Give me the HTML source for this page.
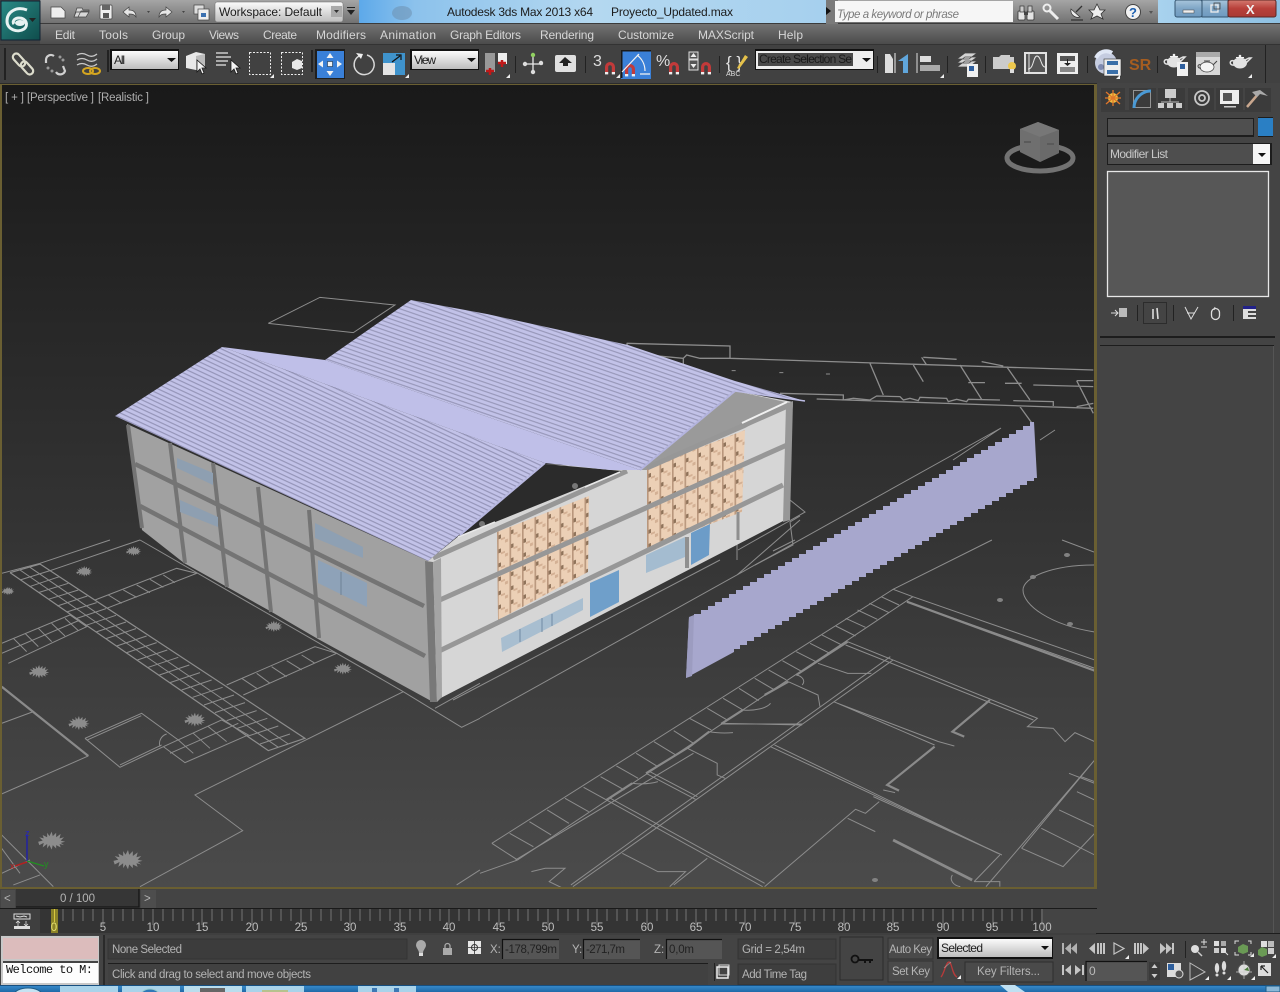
<!DOCTYPE html>
<html><head><meta charset="utf-8"><title>Autodesk 3ds Max 2013 x64 Proyecto_Updated.max</title>
<style>
html,body{margin:0;padding:0;background:#444;overflow:hidden}
svg{display:block;position:absolute;left:0;top:0}
text{font-family:"Liberation Sans",sans-serif;font-size:12px;fill:#cfcfcf}
.m{fill:#d6d6d6}.d{fill:#1c1c1c}.g{fill:#b4b4b4;font-size:11.5px}.t{fill:#bdbdbd;font-size:11.5px;text-anchor:middle}
.p{fill:none;stroke:#8d8d8d;stroke-width:1;vector-effect:non-scaling-stroke}
.b{fill:none;stroke:#8a8a8a;stroke-width:2.2;vector-effect:non-scaling-stroke}
.w{fill:none;stroke:#eee;stroke-width:1.6}
.wf{fill:#e6e6e6}
.l{fill:#aeaeae;font-size:11.5px}
</style></head><body>
<svg width="1280" height="992" viewBox="0 0 1280 992" xmlns="http://www.w3.org/2000/svg">
<defs>
<linearGradient id="vp" x1="0" y1="0" x2="0" y2="1"><stop offset="0" stop-color="#191919"/><stop offset=".33" stop-color="#292929"/><stop offset=".6" stop-color="#363636"/><stop offset="1" stop-color="#4b4b4b"/></linearGradient>
<linearGradient id="gt" x1="0" y1="0" x2="0" y2="1"><stop offset="0" stop-color="#a5a5a5"/><stop offset="1" stop-color="#6f6f6f"/></linearGradient>
<linearGradient id="mn" x1="0" y1="0" x2="0" y2="1"><stop offset="0" stop-color="#737373"/><stop offset="1" stop-color="#494949"/></linearGradient>
<linearGradient id="aero" x1="0" y1="0" x2="1" y2="0"><stop offset="0" stop-color="#5da9ea"/><stop offset=".12" stop-color="#8cc2ec"/><stop offset=".5" stop-color="#b4d8f0"/><stop offset="1" stop-color="#a6d0ee"/></linearGradient>
<linearGradient id="aero2" x1="0" y1="0" x2="1" y2="0"><stop offset="0" stop-color="#a8d2ee"/><stop offset="1" stop-color="#8ec0e2"/></linearGradient>
<linearGradient id="dd" x1="0" y1="0" x2="0" y2="1"><stop offset="0" stop-color="#fbfbfb"/><stop offset="1" stop-color="#bdbdbd"/></linearGradient>
<linearGradient id="tb" x1="0" y1="0" x2="0" y2="1"><stop offset="0" stop-color="#3a8ccd"/><stop offset="1" stop-color="#1e6aa8"/></linearGradient>
<linearGradient id="cl" x1="0" y1="0" x2="0" y2="1"><stop offset="0" stop-color="#d47a70"/><stop offset=".5" stop-color="#b8403a"/><stop offset="1" stop-color="#a83a35"/></linearGradient>
<linearGradient id="gl" x1="0" y1="0" x2="0" y2="1"><stop offset="0" stop-color="#a9c6dc"/><stop offset=".5" stop-color="#7fa6c6"/><stop offset="1" stop-color="#6e9ac0"/></linearGradient>
<linearGradient id="teal" x1="0" y1="0" x2="1" y2="1"><stop offset="0" stop-color="#2a8a86"/><stop offset="1" stop-color="#0f4d4c"/></linearGradient>
<pattern id="r1" patternUnits="userSpaceOnUse" width="60" height="4.2" patternTransform="translate(115 416) rotate(25)"><rect width="60" height="4.2" fill="#c2c2e8"/><rect y="2.9" width="60" height="1.1" fill="#9191b4"/></pattern>
<pattern id="r2" patternUnits="userSpaceOnUse" width="60" height="4.2" patternTransform="translate(327 360) rotate(19)"><rect width="60" height="4.2" fill="#c2c2e8"/><rect y="2.9" width="60" height="1.1" fill="#9494b6"/></pattern>
<pattern id="br" patternUnits="userSpaceOnUse" width="12.5" height="14" patternTransform="translate(497 532) matrix(1 -.41 0 1 0 0)"><rect width="12.5" height="14" fill="#ecd0b6"/><rect x="0" y="4" width="4" height="4" fill="#8f735a"/><rect x="0" y="0" width="1.6" height="14" fill="#b8967c"/><rect x="4" y="8" width="4" height="2" fill="#d3b094"/><rect x="8" y="11" width="3" height="3" fill="#d3b094"/></pattern>
<symbol id="pl" viewBox="-12 -8 24 16" overflow="visible"><polygon points="-12,1 -8,0 -11,-3 -7,-2 -8,-5 -4,-3 -4,-7 -2,-4 0,-8 1,-4 4,-7 4,-3 8,-6 7,-2 11,-3 8,0 12,1 8,2 11,4 7,3 8,6 4,4 4,7 1,4 0,8 -2,4 -4,7 -4,3 -8,6 -7,2 -11,4" fill="#8c8c8c"/></symbol>
<g id="mag"><path d="M-5 6V0a5 5 0 0 1 10 0v6h-3.2V0a1.8 1.8 0 0 0-3.6 0v6z" fill="#c23a3a"/><rect x="-5" y="5" width="3.2" height="2.4" fill="#eee"/><rect x="1.8" y="5" width="3.2" height="2.4" fill="#eee"/></g>
<path id="cur" d="M0 0v12l3-3 2 5 2-1-2-5h4z" fill="#f2f2f2" stroke="#1a1a1a" stroke-width=".8"/>
<path id="cn" d="M0 4h4V0z" fill="#eee"/>
<g id="tp"><ellipse cx="0" cy="1" rx="7" ry="5.500" fill="#e2e2e2"/><path d="M6 1L11-4H9L5-2zM-6-1C-11-3-11 4-6 3" fill="none" stroke="#e2e2e2" stroke-width="1.500"/><path d="M-4-4h8v-1h-8z" fill="#f2f2f2"/><circle cx="0" cy="-6" r="1.300" fill="#f2f2f2"/></g>
</defs>

<rect width="1280" height="992" fill="#444"/>

<!-- VIEWPORT -->
<rect x="0" y="83" width="1097" height="806" fill="#6a5f32"/>
<rect x="2" y="85" width="1092" height="802" fill="url(#vp)"/>
<svg x="2" y="85" width="1092" height="802" viewBox="2 85 1092 802" overflow="hidden">

<!-- plan lower-left (zoom coords) -->
<g transform="translate(0 540) scale(.3333)">
<path class="p" d="M5 100L120 70L330 0M150 92L420 0M420 0L1210 455L1385 562L1440 535M1305 505L1440 430M1210 455L585 765L728 872L420 1040M1370 1035L1440 990"/>
<path class="p" d="M5 440L100 515M5 550L100 515M265 648L5 762"/><path class="b" d="M5 440L265 648"/>
<path class="p" d="M255 595L425 520L535 600M262 600L424 527M255 595L360 682L490 620M360 675L485 615M480 620A30 30 0 0 1 500 582"/>
<!-- main strip -->
<path class="p" d="M30 98L120 72L915 595L805 632L30 98" style="stroke-width:1.2"/>
<path class="p" d="M60 120L150 92M88 140L178 110M115 158L205 130M145 178L235 150M172 198L262 168M200 216L290 188M228 236L318 206M258 256L348 226M288 276L378 246M318 296L408 266M350 318L440 288M380 338L470 308M412 360L502 330M445 382L535 352M478 405L568 375M510 428L600 398M545 450L635 420M578 472L668 442M612 495L702 465M645 518L735 488M680 542L770 512M712 565L802 535M745 588L835 558M780 612L870 582"/>
<path class="p" d="M60 90L835 622M90 82L865 612"/>
<path class="p" d="M285 180L530 85L590 100L320 205M325 165L365 190M370 150L410 172M410 135L450 158M450 118L490 142M490 105L525 128"/>
<path class="p" d="M5 310L210 225L260 260L25 370M40 295L80 335M75 280L115 320M115 265L155 305M155 250L195 288M195 235L235 272M5 340L240 240"/>
<path class="p" d="M680 435L945 320L1010 340L730 465M725 415L770 445M770 400L810 430M815 380L860 410M860 362L905 390M905 345L945 370"/>
<path class="p" d="M490 620L665 540L745 585L555 668L490 620M535 600L580 640M580 580L630 625M625 560L680 605M510 640L715 550"/>
<path class="p" d="M5 885L160 1040M5 925L60 1000M5 1000L90 960M40 1035L120 1005"/>
<!-- plants -->
<g>
<use href="#pl" x="370" y="18" width="62" height="30"/>
<use href="#pl" x="220" y="78" width="66" height="32"/>
<use href="#pl" x="5" y="138" width="38" height="30"/>
<use href="#pl" x="80" y="375" width="75" height="40"/>
<use href="#pl" x="197" y="528" width="80" height="42"/>
<use href="#pl" x="546" y="518" width="78" height="42"/>
<use href="#pl" x="788" y="242" width="68" height="34"/>
<use href="#pl" x="994" y="368" width="70" height="36"/>
<use href="#pl" x="110" y="875" width="90" height="54"/>
<use href="#pl" x="338" y="930" width="92" height="58"/>
</g>
</g>

<!-- plan lower-right (zoom coords: x/2.53, y/3) -->
<g transform="translate(480 540) scale(.3953 .3333)">
<path class="p" d="M30 910L1045 148L1095 170M1045 148L1295 0M95 960L1095 170M0 1000L95 960M30 910L95 960M130 995L165 985L215 985L175 1025L210 1045"/>
<path class="p" d="M75 880L135 920M125 845L180 885M170 810L225 850M215 775L275 815M262 742L320 780M305 710L365 750M345 678L400 715M395 640L450 680M440 605L495 645M490 572L540 610M530 535L585 570M575 505L625 540M615 475L665 510M655 445L705 482M695 415L745 450M730 390L775 420M765 362L815 395M800 335L850 365M835 310L885 340M865 285L915 315M900 258L950 288M925 235L975 262M955 210L1005 238M985 190L1035 218M1015 170L1060 195"/>
<path class="b" d="M320 780L385 730M420 700L530 620L580 575M610 552L665 510M720 465L780 425M800 405L930 305"/>
<path class="p" d="M420 700L545 778M430 695L550 770M610 552L815 552M610 550L815 555M665 510A60 30 0 0 0 735 490M780 425L855 465L860 500M800 405A25 20 0 0 1 815 435M855 370L930 400L990 400M385 730A60 20 0 0 0 450 725M525 625L600 670L600 705L620 715M580 575A60 15 0 0 0 640 578"/>
<path class="p" d="M320 780L715 1040M330 775L720 1030M90 960L540 640M235 1040L445 865L735 620L1045 360M230 1035L440 855L730 612L1038 350M360 940L450 995L520 995L480 1040M575 955L490 1035M1080 185L1555 385"/>
<path class="p" d="M1095 170L1555 360M930 305L1410 535L1385 560L1450 565L1480 605L1505 578L1555 605M925 315L1400 540M735 620L1320 945M745 615L1310 940M895 485L1150 615M905 490L1160 605"/>
<path class="b" d="M1080 185L1555 392M1290 480L1225 545L1195 575L1225 590M1150 620L1030 735L1060 752"/>
<path class="p" d="M1160 605L1200 618M1020 750L1050 758M995 770L1320 945M1315 945L1250 1025M1010 785L975 820L950 808L720 1040M930 835L1000 875"/>
<path class="b" d="M1045 900L1245 1020" style="stroke-width:2.8"/>
<path class="p" d="M1195 1005A30 25 0 0 0 1215 1040M1250 1025L1315 1025V1040M1370 925L1555 660M1370 925L1475 980L1555 880M1420 865L1555 945M1465 810L1555 860M1510 755L1555 780M1490 700L1555 730M1520 710L1555 725M1280 1040L1555 660"/>
</g>
<path class="p" d="M1095 565C1050 565 1023 578 1023 590C1023 605 1050 625 1095 632M1062 540L1094 552"/>
<g fill="#828282"><ellipse cx="1067" cy="555" rx="3" ry="2"/><ellipse cx="1000" cy="600" rx="3" ry="2"/><ellipse cx="1033" cy="577" rx="3" ry="2"/><ellipse cx="1070" cy="624" rx="3" ry="2"/><ellipse cx="875" cy="880" rx="3" ry="2"/></g>

<!-- real coords plan -->
<path class="p" d="M453 700L720 560M480 718L1001 428M953 460L1001 428M1040 440L1055 430M737 575L800 520M737 537L737 560"/>
<path class="p" d="M738 550L805 512L790 500M773 551L795 540M755 565L793 545L790 522M790 522L800 516"/>
<!-- top rect -->
<g transform="translate(100 290) scale(.3333)"><path class="p" d="M505 100L660 22L885 45L760 128L505 100"/></g>
<!-- far plan -->
<g transform="translate(620 330) scale(.3333)">
<path class="p" style="stroke-width:1.3" d="M20 40L330 48L330 85L1420 120M20 40L30 70L190 85L190 110M190 85L200 75L240 85L330 85M480 190L670 195L670 210L700 205L750 210L770 198L840 200L850 210L870 205L895 212L900 202L980 205L985 215L1010 208L1040 215L1045 208L1140 210M590 207L1420 235M750 100L790 195M880 105L910 155M1020 105L1085 208M1160 110L1230 210M910 82L1010 88M905 82L920 105M1085 95L1150 108M1240 165L1420 170M1370 152L1420 152M1370 152L1420 250M1045 158L1095 158M1155 160L1205 160M1200 230L1240 285M1180 212L1300 215L1300 228M1370 230L1420 220"/>
<path class="p" d="M335 122h12M478 128h12M618 132h12"/>
</g>

<!-- ViewCube -->
<ellipse cx="1040" cy="158" rx="33" ry="13" fill="#1a1a1a" stroke="#727272" stroke-width="5"/>
<polygon points="1020,129 1038,122 1059,130 1059,153 1040,162 1020,152" fill="#6f6f6f"/>
<polygon points="1020,129 1038,122 1059,130 1040,137" fill="#777"/>
<polygon points="1040,137 1059,130 1059,153 1040,162" fill="#6a6a6a"/>
<path d="M1024 142h7M1047 144h7" stroke="#5a5a5a" stroke-width="2"/>

<!-- Axis tripod -->
<path d="M27 861V835" stroke="#1c1cb0" stroke-width="1.3"/><text x="25" y="836" style="font-size:9px;fill:#2424c4">z</text>
<path d="M27 862L15 866" stroke="#b02020" stroke-width="1.5"/><text x="10" y="869" style="font-size:9px;fill:#b82222">x</text>
<path d="M27 861L44 866" stroke="#229022" stroke-width="1.3"/><text x="44" y="867" style="font-size:9px;fill:#229022">y</text>

<!-- Wall panel (fence) -->
<path fill="#a7a7cd" d="M689 617h5v-3h7v-4h7v-4h7v-4h7v-4h7v-4h7v-4h7v-4h7v-4h7v-4h7v-4h7v-4h7v-4h7v-4h7v-4h7v-4h7v-4h7v-4h7v-4h7v-4h7v-4h7v-4h7v-4h7v-4h7v-4h7v-4h7v-4h7v-4h7v-4h7v-4h7v-4h7v-4h7v-4h7v-4h7v-4h7v-4h7v-4h7v-4h7v-4h7v-4h7v-4h7v-4h7v-4h7v-4h7v-4h7v-4h7v-4h7v-4h7v-4h4L1037 478h-3v3h-7v4h-7v4h-7v4h-7v4h-7v4h-7v4h-7v4h-7v4h-7v4h-7v4h-7v4h-7v4h-7v4h-7v4h-7v4h-7v4h-7v4h-7v4h-7v4h-7v4h-7v4h-7v4h-7v4h-7v4h-7v4h-7v4h-7v4h-7v4h-7v4h-7v4h-7v4h-7v4h-7v4h-7v4h-7v4h-7v4h-7v4h-7v4h-7v4h-7v4h-7v4h-7v4h-6v3L686 678z"/>
<polygon points="689,617 694,615 692,676 686,678" fill="#9c9cc0"/>

<!-- BUILDING -->
<!-- left wall -->
<polygon points="127,424 428,561 433,702 318,639 270,611 227,587 184,563 142,530" fill="#a1a1a1"/>
<g stroke="#747474" fill="none">
<path stroke-width="4.500" d="M135 464L424 606M140 506L425 656"/>
<path stroke-width="4" d="M128 425L142 528M170 443L185 563M213 463L227 587M258 487L271 612M309 510L319 638"/>
</g>
<polygon points="177,458 213,473 213,485 177,468" fill="#8e9fb1"/>
<polygon points="180,500 218,517 218,527 180,512" fill="#8e9fb1"/>
<polygon points="315,523 363,547 363,558 315,538" fill="#8ea0b3"/>
<polygon points="318,560 367,583 367,607 318,583" fill="#8ea2b8"/>
<path d="M341 572V595" stroke="#6f8296" stroke-width="1"/>

<!-- right wall -->
<polygon points="428,561 460,535 545,464 640,470 735,391 793,402 785,520 433,702" fill="#d6d6d6"/>
<!-- dark gable gap -->
<polygon points="458,537 545,464 622,471" fill="#2b2b2b"/>
<circle cx="575" cy="486" r="3" fill="#777"/><circle cx="482" cy="524" r="3" fill="#777"/>
<!-- gable soffit -->
<polygon points="640,470 735,391 790,403 745,428 647,470" fill="#9a9a9a"/>
<!-- brick panels -->
<polygon points="497,532 589,496 588,572 498,620" fill="url(#br)"/>
<polygon points="647,468 745,430 742,512 647,548" fill="url(#br)"/>
<!-- upper ornaments -->
<polygon points="501,638 583,598 583,610 502,652" fill="#a8bed0"/>
<path d="M520 629V642M542 618V632M552 614V626" stroke="#6f8aa3" stroke-width="1"/>
<polygon points="590,583 619,570 619,602 590,617" fill="#6f9fca"/>
<polygon points="646,555 685,537 685,557 646,573" fill="#a4bcd0"/>
<polygon points="691,533 710,524 709,555 691,565" fill="#6c9cc8"/>
<path d="M687 537V568" stroke="#8f8f8f" stroke-width="4"/>
<path d="M738 512V540" stroke="#8f8f8f" stroke-width="3"/>
<!-- beams -->
<g stroke="#979797" fill="none" stroke-width="5">
<path d="M433 558L627 471"/>
<path d="M647 468L790 405"/>
<path d="M433 603L787 445"/>
<path d="M435 653L783 485"/>
</g>
<path d="M742 423L787 402" stroke="#f0f0f0" stroke-width="2"/>
<path d="M458 537L495 522M585 487L620 472" stroke="#e8e8e8" stroke-width="1.500"/>
<!-- posts -->
<polygon points="425,561 433,562 437,702 430,702" fill="#787878"/>
<polygon points="433,562 441,558 442,697 437,702" fill="#a4a4a4"/>
<polygon points="786,404 793,401 790,520 783,522" fill="#979797"/>

<!-- roofs -->
<polygon points="325,360 411,300 487,314 628,345 735,381 805,401 735,391 640,470" fill="url(#r2)"/>
<polygon points="222,347 325,360 640,470 610,470 545,463" fill="#bfbfe8"/>
<polygon points="115,416 222,347 545,463 428,561" fill="url(#r1)"/>
<path d="M735 391L805 401" stroke="#bdbde4" stroke-width="1.500"/>
<path d="M640 470L735 391" stroke="#b4b4de" stroke-width="2"/>
<path d="M545 463L460 535" stroke="#b8b8e0" stroke-width="2"/>
</svg>

<text class="l" x="5" y="101" textLength="19">[+]</text>
<text class="l" x="27" y="101" textLength="67">[Perspective ]</text>
<text class="l" x="98" y="101" textLength="51">[Realistic ]</text>

<!-- TITLE BAR -->
<rect x="40" y="0" width="319" height="24" fill="url(#gt)"/>
<rect x="359" y="0" width="467" height="23" fill="url(#aero)"/>
<rect x="826" y="0" width="334" height="24" fill="url(#gt)"/>
<rect x="1158" y="0" width="122" height="23" fill="url(#aero2)"/>
<rect x="0" y="23" width="1280" height="1" fill="#3b3b3b"/>
<ellipse cx="402" cy="13" rx="10" ry="7" fill="#6b8baa" opacity=".5"/>
<text class="d" x="447" y="16" textLength="146">Autodesk 3ds Max  2013 x64</text>
<text class="d" x="611" y="16" textLength="122">Proyecto_Updated.max</text>

<!-- qa icons -->
<path d="M51 7h10l4 4v7H51z" fill="#eee" stroke="#444" stroke-width=".7"/>
<path d="M74 17l3-9h5l1 2h6v1h-8l-3 6zM74 17l2-5h13l-3 5z" fill="#d8d8d8" stroke="#444" stroke-width=".7"/>
<rect x="100" y="5" width="12" height="14" rx="1" fill="#eee" stroke="#444" stroke-width=".7"/><rect x="102" y="5" width="8" height="5" fill="#666"/><rect x="103" y="13" width="6" height="5" fill="#555"/>
<path d="M123 12l6-5v3c4 0 7 2 7 7-2-3-4-3-7-3v3z" fill="#e6e6e6" stroke="#444" stroke-width=".7"/>
<path d="M147 11l3 0-1.500 2z" fill="#444"/>
<path d="M172 12l-6-5v3c-4 0-7 2-7 7 2-3 4-3 7-3v3z" fill="#e6e6e6" stroke="#444" stroke-width=".7"/>
<path d="M182 11l3 0-1.500 2z" fill="#444"/>
<rect x="194" y="5" width="10" height="9" fill="#ddd" stroke="#444" stroke-width=".7"/><rect x="198" y="9" width="11" height="11" fill="#eee" stroke="#444" stroke-width=".7"/><rect x="201" y="13" width="5" height="4" fill="#3a70b0"/>
<rect x="215" y="2" width="128" height="20" rx="2" fill="url(#dd)" stroke="#666" stroke-width=".5"/>
<text class="d" x="219" y="16" textLength="103">Workspace: Default</text>
<rect x="331" y="6" width="11" height="11" fill="#aaa"/><path d="M334 10h5l-2.500 3z" fill="#333"/>
<path d="M347 7h8v1h-8zM347 10h8l-4 5z" fill="#222"/>
<path d="M826 0h12v24h-12z" fill="#7a7a7a"/><path d="M825 7l5 4-5 4z" fill="#111" transform="translate(1)"/>
<rect x="835" y="1" width="178" height="21" fill="#f6f6f6"/>
<text x="837" y="18" style="font-style:italic;font-size:11.5px;fill:#7a7a7a" textLength="122">Type a keyword or phrase</text>
<g transform="translate(1018 6)"><rect x="0" y="5" width="7" height="9" rx="1" fill="#e4e4e4" stroke="#333" stroke-width=".8"/><rect x="9" y="5" width="7" height="9" rx="1" fill="#e4e4e4" stroke="#333" stroke-width=".8"/><rect x="2" y="0" width="4" height="6" fill="#ccc" stroke="#333" stroke-width=".7"/><rect x="10" y="0" width="4" height="6" fill="#ccc" stroke="#333" stroke-width=".7"/><rect x="6" y="6" width="4" height="3" fill="#444"/></g>
<g transform="translate(1043 4)"><circle cx="4" cy="4" r="3.500" fill="none" stroke="#eee" stroke-width="2"/><path d="M6 6l9 9" stroke="#eee" stroke-width="3"/></g>
<g transform="translate(1069 5)"><path d="M2 4a7 7 0 0 0 9 8z" fill="#eee" stroke="#333" stroke-width=".7"/><path d="M7 7l6-6M2 15h12" stroke="#333" stroke-width="1.300"/></g>
<polygon points="1097,4 1100,10 1105,10 1101,14 1103,19 1097,16 1091,19 1093,14 1089,10 1094,10" fill="#eee" stroke="#333" stroke-width=".8"/>
<circle cx="1133" cy="12" r="7.500" fill="#f2f2f2" stroke="#444"/><text x="1129" y="17" style="font-size:13px;font-weight:bold;fill:#1c5fb0">?</text>
<path d="M1149 11h4l-2 3z" fill="#555"/>
<g><rect x="1175" y="0" width="27" height="17" rx="2" fill="url(#gl)" stroke="#35556f"/><rect x="1183" y="10" width="11" height="3" fill="#eee" stroke="#444" stroke-width=".5"/>
<rect x="1202" y="0" width="26" height="17" fill="url(#gl)" stroke="#35556f"/><rect x="1211" y="5" width="7" height="7" fill="none" stroke="#eee" stroke-width="1.300"/><rect x="1214" y="3" width="6" height="6" fill="none" stroke="#444" stroke-width=".8"/>
<rect x="1228" y="0" width="48" height="17" rx="2" fill="url(#cl)" stroke="#5c2623"/><text x="1246" y="14" style="font-size:13px;font-weight:bold;fill:#f0f0f0">X</text></g>

<!-- MENU -->
<rect x="40" y="24" width="1240" height="21" fill="url(#mn)"/>
<text class="m" x="55" y="39" textLength="20">Edit</text><text class="m" x="99" y="39" textLength="29">Tools</text><text class="m" x="152" y="39" textLength="33">Group</text><text class="m" x="209" y="39" textLength="30">Views</text><text class="m" x="263" y="39" textLength="34">Create</text><text class="m" x="316" y="39" textLength="50">Modifiers</text><text class="m" x="380" y="39" textLength="56">Animation</text><text class="m" x="450" y="39" textLength="71">Graph Editors</text><text class="m" x="540" y="39" textLength="54">Rendering</text><text class="m" x="618" y="39" textLength="56">Customize</text><text class="m" x="698" y="39" textLength="56">MAXScript</text><text class="m" x="778" y="39" textLength="25">Help</text>

<!-- LOGO -->
<rect x="1" y="1" width="39" height="39" fill="url(#teal)" stroke="#123"/>
<path d="M27 10C16 6 7 12 7 21c0 9 11 12 17 8 5-4 2-11-5-11-5 0-7 4-5 6" fill="none" stroke="#e8f2f2" stroke-width="3"/>
<ellipse cx="20" cy="23" rx="5" ry="3" fill="#e8f2f2"/>
<path d="M29 18h7l-3.500 4z" fill="#222"/>

<!-- TOOLBAR -->
<rect x="0" y="45" width="1280" height="38" fill="#414141"/>
<rect x="0" y="44" width="1280" height="1" fill="#333"/>
<rect x="0" y="83" width="1097" height="1" fill="#2b2b2b"/>
<rect x="4" y="48" width="2" height="32" fill="#222"/><rect x="1265" y="45" width="1" height="38" fill="#222"/>
<!-- link -->
<rect x="-7.500" y="-3.500" width="15" height="7" rx="3.500" transform="translate(19 60) rotate(48)" fill="none" stroke="#dcdccc" stroke-width="2.200"/>
<rect x="-7.500" y="-3.500" width="15" height="7" rx="3.500" transform="translate(27 68) rotate(48)" fill="none" stroke="#dcdccc" stroke-width="2.200"/>
<!-- unlink -->
<g fill="none" stroke="#d0d0d0" stroke-width="2.200"><path d="M46 63v-3a5 5 0 0 1 8-4M56 72a5 5 0 0 0 9-1l-2-5"/></g>
<g fill="#9a9a9a"><circle cx="60" cy="57" r="1.500"/><circle cx="63" cy="60" r="1.500"/><circle cx="48" cy="68" r="1.500"/><circle cx="52" cy="71" r="1.500"/></g>
<!-- bind -->
<g fill="none" stroke="#c8c8c8" stroke-width="1.300"><path d="M77 55q5-3 10 0t10-1M77 60q5-3 10 0t10-1M77 65q5-3 10 0t10-1"/></g>
<ellipse cx="88" cy="71" rx="5" ry="3" fill="none" stroke="#d4a520" stroke-width="2"/><ellipse cx="95" cy="71" rx="5" ry="3" fill="none" stroke="#d4a520" stroke-width="2"/>
<rect x="107" y="50" width="2" height="22" fill="#222"/>
<!-- All -->
<rect x="110" y="49" width="69" height="21" fill="#111"/><rect x="112" y="51" width="66" height="18" fill="url(#dd)"/>
<text class="d" x="114" y="64" textLength="11">All</text><path d="M167 58h9l-4.500 4z" fill="#111"/>
<!-- select object -->
<polygon points="186,56 196,52 205,54 205,68 196,70 186,68" fill="#e8e8e8"/><polygon points="196,56 205,54 205,68 196,70" fill="#bbb"/>
<use href="#cur" x="197" y="60"/>
<path d="M216 53h12M216 57h15M216 61h12M216 65h10" stroke="#e8e8e8" stroke-width="1.200"/><use href="#cur" x="231" y="60"/>
<rect x="249.500" y="52.500" width="21" height="22" fill="none" stroke="#eee" stroke-dasharray="2 1.500"/><use href="#cn" x="270" y="74"/>
<rect x="281.500" y="52.500" width="21" height="22" fill="none" stroke="#eee" stroke-dasharray="2 1.500"/><polygon points="292,62 297,59 302,61 302,68 297,70 292,68" fill="#e8e8e8"/>
<rect x="311" y="50" width="2" height="22" fill="#222"/>
<!-- move -->
<rect x="315" y="49" width="30" height="30" fill="#1f1f1f"/><rect x="317" y="51" width="27" height="27" fill="#3a80d8"/>
<path d="M330 53l-3.500 5h7zM330 76l-3.500-5h7zM318 64l5-3.500v7zM342 64l-5-3.500v7z" fill="#f2f2f2"/><rect x="327.500" y="61.500" width="5" height="5" fill="#f2f2f2" stroke="#234" stroke-width=".6"/>
<!-- rotate -->
<path d="M367 55a10 10 0 1 1-8 1" fill="none" stroke="#d8d8d8" stroke-width="1.500"/><path d="M356 53l7 1-2 5z" fill="#eee"/>
<!-- scale -->
<rect x="383" y="53" width="22" height="22" fill="#3f93cc"/><rect x="383" y="63" width="12" height="12" fill="#e4e4e4"/><path d="M392 62l8-6M396 55h5v5" fill="none" stroke="#111" stroke-width="1.200"/><use href="#cn" x="405" y="74"/>
<!-- View -->
<rect x="410" y="49" width="69" height="21" fill="#111"/><rect x="412" y="51" width="66" height="18" fill="url(#dd)"/>
<text class="d" x="414" y="64" textLength="22">View</text><path d="M467 58h9l-4.500 4z" fill="#111"/>
<!-- pivot -->
<rect x="485" y="53" width="10" height="19" fill="#999"/><rect x="498" y="53" width="9" height="11" fill="#eee"/>
<path d="M490 68v7M486 71h8" stroke="#c01818" stroke-width="2.500"/><path d="M502 60v7M498 63h8" stroke="#c01818" stroke-width="2.500"/><use href="#cn" x="506" y="74"/>
<rect x="515" y="56" width="1" height="17" fill="#222"/>
<!-- manipulate -->
<path d="M533 56v18M523 64h20" stroke="#e8e8e8" stroke-width="1.300"/><circle cx="533" cy="55" r="2.200" fill="#90d060"/><circle cx="525" cy="64" r="2.200" fill="#ddd"/><circle cx="541" cy="63" r="2.200" fill="#ddd"/><circle cx="533" cy="72" r="2.200" fill="#ddd"/>
<rect x="555" y="55" width="21" height="17" rx="2" fill="#e0e0e0"/><path d="M565 57l-6 6h4v3h5v-3h4z" fill="#222"/>
<rect x="585" y="56" width="1" height="17" fill="#222"/>
<!-- snaps -->
<text x="593" y="66" style="font-size:16px;fill:#dedede">3</text><use href="#mag" x="610" y="67"/><use href="#cn" x="616" y="74"/>
<rect x="621" y="50" width="30" height="29" fill="#3a80d8"/><rect x="621" y="50" width="30" height="1.500" fill="#1a1a1a"/><rect x="621" y="50" width="1.500" height="28" fill="#1a1a1a"/>
<g transform="translate(630 69)"><use href="#mag"/></g>
<path d="M622 72l17-18M640 74h10M637 55a20 20 0 0 1 8 16" fill="none" stroke="#f2f2f2" stroke-width="1.200"/>
<text x="656" y="66" style="font-size:16px;fill:#dedede">%</text><use href="#mag" x="674" y="67"/>
<rect x="689" y="52" width="9" height="7" fill="#555" stroke="#ddd"/><rect x="689" y="60" width="9" height="10" fill="#555" stroke="#ddd"/><path d="M693.500 53l-3 4h6zM693.500 68l-3-4h6z" fill="#eee"/><use href="#mag" x="706" y="67"/>
<rect x="719" y="56" width="1" height="17" fill="#222"/>
<!-- named sel -->
<text x="726" y="68" style="font-size:17px;fill:#e2e2e2">{ }</text><text x="726" y="76" style="font-size:7px;fill:#ddd">ABC</text>
<path d="M737 68l8-13 3 2-9 12z" fill="#e5c14a"/>
<!-- Create selection -->
<rect x="755" y="49" width="119" height="21" fill="#111"/><rect x="756" y="51" width="117" height="18" fill="#eee"/><rect x="758" y="53" width="95" height="13" fill="#4a4a4a"/>
<text x="759" y="63" style="fill:#1a1a1a" textLength="93">Create Selection Se</text><path d="M862 58h9l-4.500 4z" fill="#111"/>
<rect x="877" y="56" width="1" height="17" fill="#222"/>
<!-- mirror -->
<path d="M885 54l5 0 3 5v14h-8z" fill="#ddd"/><path d="M895 53v20" stroke="#eee" stroke-width="1"/><path d="M908 54v19h-5v-12l-5 0z" fill="#60a6dc"/>
<path d="M917 53v20" stroke="#ddd"/><rect x="920" y="56" width="11" height="6" fill="#ddd"/><rect x="920" y="65" width="20" height="6" fill="#aaa"/><use href="#cn" x="940" y="74"/>
<rect x="947" y="56" width="1" height="17" fill="#222"/>
<!-- layers -->
<path d="M957 59l8-6h12l-8 6zM957 63l8-6h12l-8 6zM957 67l8-6h12l-8 6z" fill="#d4d4d4" stroke="#444" stroke-width=".7"/><rect x="967" y="64" width="11" height="13" fill="#f0f0f0"/><rect x="969" y="66" width="5" height="5" fill="#2e5f9e"/>
<rect x="985" y="56" width="1" height="17" fill="#222"/>
<!-- folder -->
<path d="M993 57h6l2-2h9v2h4v12h-21z" fill="#ccc"/><circle cx="1012" cy="66" r="4" fill="#eec94e"/><rect x="1010" y="69" width="4" height="4" fill="#ddd"/>
<rect x="1024" y="52" width="23" height="22" fill="#e2e2e2"/><rect x="1026" y="54" width="19" height="18" fill="#555"/><path d="M1029 54v18M1028 69c6 0 5-13 9-13s4 11 8 11" fill="none" stroke="#e8e8e8"/>
<rect x="1057" y="53" width="21" height="21" fill="#eee"/><rect x="1060" y="56" width="15" height="5" fill="#555"/><rect x="1060" y="67" width="15" height="5" fill="#888"/><path d="M1064 63h7l-3.500 3z" fill="#222"/><rect x="1067" y="59" width="1" height="5" fill="#222"/>
<rect x="1087" y="56" width="1" height="17" fill="#222"/>
<!-- material -->
<circle cx="1106" cy="63" r="11" fill="#c5cce0"/><path d="M1096 58a11 11 0 0 1 16-5" stroke="#dfe6f4" fill="none" stroke-width="4"/><circle cx="1101" cy="67" r="3" fill="#7f8ab0"/><rect x="1104" y="59" width="17" height="17" fill="#eee" stroke="#333" stroke-width=".6"/><rect x="1107" y="61" width="11" height="4" fill="#3a6fa8"/><rect x="1107" y="70" width="11" height="4" fill="#3a6fa8"/><use href="#cn" x="1116" y="75"/>
<text x="1129" y="70" style="font-size:16px;font-weight:bold;fill:#a65d20">SR</text>
<rect x="1157" y="56" width="1" height="17" fill="#222"/>
<!-- teapots -->
<use href="#tp" x="1174" y="61"/><rect x="1177" y="62" width="11" height="14" fill="#f0f0f0"/><rect x="1180" y="64" width="5" height="5" fill="#2e5f9e"/>
<rect x="1196" y="52" width="24" height="23" fill="#d8d8d8"/><rect x="1196" y="52" width="24" height="5" fill="#aaa"/><g transform="translate(1207 66)"><ellipse cx="0" cy="1" rx="7" ry="5" fill="#f5f5f5" stroke="#444" stroke-width=".7"/><path d="M6-1l4-4M-6-1c-4-2-4 4 0 3" fill="none" stroke="#444"/><path d="M-3-5h6" stroke="#444"/></g>
<use href="#tp" x="1240" y="62"/><use href="#cn" x="1248" y="74"/>

<!-- COMMAND PANEL -->
<rect x="1097" y="84" width="183" height="905" fill="#444"/>
<g fill="#3b3b3b"><rect x="1101" y="88" width="24" height="22"/><rect x="1129" y="88" width="27" height="22"/><rect x="1158" y="88" width="27" height="22"/><rect x="1188" y="88" width="26" height="22"/><rect x="1216" y="88" width="27" height="22"/><rect x="1245" y="88" width="26" height="22"/></g>
<path d="M1101 111h170" stroke="#333"/>
<circle cx="1113" cy="98" r="5" fill="#f2c040"/><path d="M1106 92l14 12M1120 92l-14 12M1113 90v16M1105 98h16" stroke="#e0762a" stroke-width="1.300"/>
<rect x="1133.500" y="90.500" width="17" height="17" fill="none" stroke="#bbb" stroke-width=".7"/><path d="M1134 108a17 17 0 0 1 17-17" fill="none" stroke="#4a9ad6" stroke-width="3"/>
<rect x="1165" y="89" width="11" height="9" fill="#ccc"/><path d="M1170 98v4M1161 102h18" stroke="#bbb"/><rect x="1158" y="103" width="6" height="5" fill="#ccc"/><rect x="1167" y="103" width="6" height="5" fill="#ccc"/><rect x="1176" y="103" width="6" height="5" fill="#ccc"/>
<circle cx="1202" cy="98" r="7" fill="none" stroke="#c8c8c8" stroke-width="1.800"/><circle cx="1202" cy="98" r="3" fill="none" stroke="#c8c8c8" stroke-width="1.800"/>
<rect x="1220" y="90" width="19" height="14" fill="#eee"/><rect x="1223" y="93" width="9" height="8" fill="#555"/><rect x="1224" y="106" width="12" height="1.500" fill="#ccc"/>
<path d="M1247 107l12-14" stroke="#c9a78e" stroke-width="2.500"/><path d="M1252 92l8-2 8 6-8-2-3 3z" fill="#aaa"/>
<!-- name -->
<rect x="1107" y="118" width="147" height="19" fill="#1d1d1d"/><rect x="1108" y="119" width="145" height="16" fill="#4f4f4f"/>
<rect x="1258" y="117" width="15" height="20" fill="#1d1d1d"/><rect x="1258" y="118" width="15" height="18" fill="#2a7fc4"/>
<!-- Modifier list -->
<rect x="1107" y="143" width="165" height="22" fill="#1d1d1d"/><rect x="1108" y="144" width="145" height="20" fill="#4e4e4e"/><rect x="1253" y="144" width="17" height="20" fill="#f6f6f6"/>
<text x="1110" y="158" style="fill:#c8c8c8" textLength="58">Modifier List</text><path d="M1258 153h8l-4 4z" fill="#111"/>
<!-- stack -->
<rect x="1107.500" y="171.500" width="161" height="125" fill="#575757" stroke="#e8e8e8" stroke-width="1.300"/>
<!-- stack icons -->
<path d="M1111 313h7M1115 310l3 3-3 3" stroke="#ddd" fill="none"/><rect x="1119" y="308" width="8" height="9" fill="#bbb"/>
<rect x="1137" y="305" width="1" height="16" fill="#222"/>
<rect x="1143.500" y="302.500" width="23" height="21" fill="none" stroke="#2c2c2c"/>
<path d="M1153 309l0 10M1157 308l1 11" stroke="#ddd" stroke-width="1.600"/>
<rect x="1173" y="305" width="1" height="16" fill="#222"/>
<path d="M1185 307l6 12 7-12M1187 313h8" stroke="#ddd" fill="none"/>
<rect x="1211.500" y="308.500" width="8" height="11" rx="4" fill="none" stroke="#ddd" stroke-width="1.300"/><path d="M1215 307l-1 3" stroke="#ddd"/>
<rect x="1233" y="305" width="1" height="16" fill="#222"/>
<rect x="1243" y="306" width="13" height="13" fill="#ddd"/><rect x="1243" y="306" width="13" height="3" fill="#22228a"/><path d="M1248 312h8M1248 316h8" stroke="#444" stroke-width="2"/>
<rect x="1100" y="336" width="175" height="2" fill="#1d1d1d"/><rect x="1100" y="345" width="174" height="1" fill="#1d1d1d"/>
<rect x="1273" y="346" width="1" height="587" fill="#555"/>

<!-- TIME SLIDER -->
<rect x="0" y="889" width="1097" height="20" fill="#444"/>
<rect x="1" y="890" width="14" height="18" fill="#4d4d4d"/><text class="g" x="4" y="902">&lt;</text>
<rect x="16" y="889" width="123" height="18" fill="#363636"/><path d="M16 907h123v-18" fill="none" stroke="#161616" stroke-width="1.300"/>
<text class="g" x="60" y="902" textLength="35">0 / 100</text>
<rect x="141" y="890" width="15" height="18" fill="#4d4d4d"/><text class="g" x="144" y="902">&gt;</text>

<!-- TRACK -->
<rect x="0" y="908" width="1097" height="27" fill="#3f3f3f"/>
<rect x="40" y="909" width="1057" height="24" fill="#343434"/>
<rect x="0" y="908" width="1097" height="1" fill="#1a1a1a"/>
<rect x="1041" y="909" width="56" height="24" fill="#444"/>
<rect x="1096" y="933" width="184" height="1" fill="#1d1d1d"/>
<path stroke="#747474" stroke-width="1" d="M63 909v12M73 909v12M83 909v12M93 909v12M103 909v16M113 909v12M123 909v12M133 909v12M143 909v12M153 909v16M163 909v12M173 909v12M183 909v12M193 909v12M202 909v16M212 909v12M222 909v12M232 909v12M242 909v12M252 909v16M262 909v12M271 909v12M281 909v12M291 909v12M301 909v16M311 909v12M321 909v12M331 909v12M341 909v12M350 909v16M360 909v12M370 909v12M380 909v12M390 909v12M400 909v16M410 909v12M420 909v12M430 909v12M440 909v12M449 909v16M459 909v12M469 909v12M479 909v12M489 909v12M499 909v16M509 909v12M518 909v12M528 909v12M538 909v12M548 909v16M558 909v12M568 909v12M578 909v12M588 909v12M597 909v16M607 909v12M617 909v12M627 909v12M637 909v12M647 909v16M657 909v12M667 909v12M677 909v12M686 909v12M696 909v16M706 909v12M716 909v12M726 909v12M736 909v12M745 909v16M755 909v12M765 909v12M775 909v12M785 909v12M795 909v16M805 909v12M814 909v12M824 909v12M834 909v12M844 909v16M854 909v12M864 909v12M874 909v12M884 909v12M893 909v16M903 909v12M913 909v12M923 909v12M933 909v12M943 909v16M953 909v12M963 909v12M973 909v12M983 909v12M993 909v16M1002 909v12M1012 909v12M1022 909v12M1032 909v12M1042 909v16"/>
<g>
<text class="t" x="103" y="931">5</text><text class="t" x="153" y="931">10</text><text class="t" x="202" y="931">15</text><text class="t" x="252" y="931">20</text><text class="t" x="301" y="931">25</text><text class="t" x="350" y="931">30</text><text class="t" x="400" y="931">35</text><text class="t" x="449" y="931">40</text><text class="t" x="499" y="931">45</text><text class="t" x="548" y="931">50</text><text class="t" x="597" y="931">55</text><text class="t" x="647" y="931">60</text><text class="t" x="696" y="931">65</text><text class="t" x="745" y="931">70</text><text class="t" x="795" y="931">75</text><text class="t" x="844" y="931">80</text><text class="t" x="893" y="931">85</text><text class="t" x="943" y="931">90</text><text class="t" x="992" y="931">95</text><text class="t" x="1042" y="931">100</text>
</g>
<rect x="51" y="909" width="7" height="24" fill="#8c8328"/><rect x="54" y="909" width="1" height="13" fill="#d8c840"/>
<text class="t" x="54" y="931" style="fill:#e6e070">0</text>
<!-- track icon -->
<rect x="14" y="914" width="16" height="5" fill="none" stroke="#ddd"/><path d="M16 916l4 1 4-1 3 1" stroke="#ddd" fill="none"/><path d="M18 921v5M16 923l2-2 2 2M26 921v5M24 924l2 2 2-2" stroke="#ddd" fill="none" stroke-width=".8"/><rect x="14" y="926" width="16" height="3" fill="#ddd"/>

<!-- STATUS -->
<rect x="0" y="935" width="1280" height="50" fill="#444"/>
<rect x="1" y="936" width="98" height="49" fill="#c8c8c8"/>
<rect x="3" y="938" width="95" height="21" fill="#dcbcbc"/>
<rect x="3" y="961" width="95" height="2" fill="#444"/>
<rect x="3" y="963" width="95" height="20" fill="#fdfdfd"/>
<text x="6" y="973" style="font-family:'Liberation Mono',monospace;font-size:12px;fill:#111" textLength="87">Welcome to M:</text>
<rect x="103" y="935" width="2" height="50" fill="#2a2a2a"/>
<rect x="108" y="939" width="299" height="20" fill="#3c3c3c"/><rect x="108" y="939" width="299" height="20" fill="none" stroke="#333"/>
<text class="g" x="112" y="953" textLength="70">None Selected</text>
<rect x="108" y="963" width="600" height="1" fill="#1d1d1d"/><rect x="108" y="964" width="600" height="21" fill="#414141"/>
<text class="g" x="112" y="978" textLength="199">Click and drag to select and move objects</text>
<path d="M416 945a5 5 0 1 1 10 0c0 3-3 5-3 8h-4c0-3-3-5-3-8z" fill="#aaa"/><rect x="419" y="953" width="4" height="3" fill="#ddd"/>
<rect x="443" y="948" width="9" height="7" fill="#aaa"/><path d="M445 948v-2a2.500 2.500 0 0 1 5 0v2" fill="none" stroke="#aaa" stroke-width="1.300"/>
<rect x="468" y="941" width="13" height="13" fill="#e6e6e6"/><circle cx="474.500" cy="947.500" r="3" fill="none" stroke="#333"/><path d="M474.500 941v13M468 947.500h13" stroke="#333" stroke-width=".8"/>
<text class="g" x="490" y="953">X:</text><text class="g" x="572" y="953">Y:</text><text class="g" x="654" y="953">Z:</text>
<rect x="502" y="939" width="57" height="20" fill="#555"/><path d="M502.500 959V939.500H559" stroke="#111" stroke-width="1.200" fill="none"/><text x="505" y="953" style="fill:#222;font-size:11.5px" textLength="52">-178,799m</text>
<rect x="583" y="939" width="57" height="20" fill="#555"/><path d="M583.500 959V939.500H640" stroke="#111" stroke-width="1.200" fill="none"/><text x="586" y="953" style="fill:#222;font-size:11.5px" textLength="39">-271,7m</text>
<rect x="666" y="939" width="56" height="20" fill="#555"/><path d="M666.500 959V939.500H722" stroke="#111" stroke-width="1.200" fill="none"/><text x="669" y="953" style="fill:#222;font-size:11.5px" textLength="25">0,0m</text>
<rect x="714" y="963" width="1" height="18" fill="#222"/>
<rect x="717" y="967" width="11" height="11" fill="none" stroke="#eee" stroke-width="1.500"/><rect x="719" y="965" width="10" height="10" fill="none" stroke="#ddd"/>
<rect x="738" y="939" width="98" height="20" fill="#3e3e3e" stroke="#333"/><text class="g" x="742" y="953" textLength="63">Grid = 2,54m</text>
<rect x="738" y="964" width="98" height="21" fill="#3e3e3e" stroke="#333"/><text class="g" x="742" y="978" textLength="65">Add Time Tag</text>
<rect x="840" y="937" width="43" height="43" fill="#444" stroke="#2b2b2b"/>
<circle cx="855" cy="959" r="3.500" fill="none" stroke="#111" stroke-width="1.800"/><path d="M858 959h15v2h-2v2h-2v-2h-3v2h-2v-2h-6z" fill="#111"/>
<rect x="888" y="938" width="45" height="21" fill="#4a4a4a" stroke="#333"/><text class="g" x="889" y="953" textLength="43">Auto Key</text>
<rect x="888" y="961" width="45" height="21" fill="#4a4a4a" stroke="#333"/><text class="g" x="892" y="975" textLength="38">Set Key</text>
<rect x="937" y="937" width="116" height="22" fill="#111"/><rect x="939" y="939" width="113" height="18" fill="url(#dd)"/><text class="d" x="941" y="952" textLength="42">Selected</text><path d="M1041 946h8l-4 4z" fill="#111"/>
<path d="M941 977c3-3 5-15 8-15s3 13 8 15" fill="none" stroke="#b83a3a" stroke-width="1.300"/><path d="M944 968l7-6" stroke="#ddd" opacity=".4"/><use href="#cn" x="957" y="975"/>
<rect x="965" y="962" width="88" height="20" fill="#4a4a4a" stroke="#2e2e2e"/><text class="g" x="977" y="975" textLength="63">Key Filters...</text>

<!-- playback -->
<g fill="#c4c4c4" stroke="none">
<path d="M1062 943h2v11h-2zM1071 943l-6 5.500 6 5.500zM1077 943l-6 5.500 6 5.500z" fill-opacity=".85"/>
<path d="M1095 943l-6 5.500 6 5.500zM1097 943h2v11h-2zM1100 943h2v11h-2zM1103 943h2v11h-2z"/>
<path d="M1114 943l10 5.500-10 5.500z" fill="none" stroke="#c4c4c4" stroke-width="1.200"/>
<use href="#cn" x="1125" y="955"/>
<path d="M1134 943h2v11h-2zM1137 943h2v11h-2zM1140 943h2v11h-2zM1143 943l6 5.500-6 5.500z"/>
<path d="M1160 943l6 5.500-6 5.500zM1166 943l6 5.500-6 5.500zM1172 943h2v11h-2z"/>
<path d="M1062 965h2v10h-2zM1071 965l-6 5 6 5zM1075 965l6 5-6 5zM1082 965h2v10h-2z"/>
</g>
<rect x="1085" y="961" width="62" height="20" fill="#555"/><path d="M1086 981V961.500H1147" stroke="#111" stroke-width="1.300" fill="none"/><text x="1089" y="975" style="fill:#bbb">0</text>
<rect x="1149" y="962" width="11" height="18" fill="#3a3a3a"/><path d="M1154.500 964l-3 4h6zM1154.500 978l-3-4h6z" fill="#ccc"/>
<rect x="1167" y="963" width="14" height="14" fill="#ddd"/><rect x="1168" y="964" width="6" height="6" fill="#2e5f9e"/><circle cx="1179" cy="974" r="4" fill="#555" stroke="#ddd"/>
<path d="M1190 963l15 9-15 8z" fill="none" stroke="#bbb"/><use href="#cn" x="1205" y="976"/>
<ellipse cx="1217" cy="968" rx="2.200" ry="5" fill="#ddd"/><ellipse cx="1224" cy="966" rx="2.200" ry="5" fill="#ddd"/><circle cx="1217" cy="975" r="1.500" fill="#ddd"/><circle cx="1224" cy="973" r="1.500" fill="#ddd"/><use href="#cn" x="1227" y="976"/>
<circle cx="1244" cy="970" r="6" fill="#ddd" stroke="#555"/><path d="M1244 970l4-3 1 4z" fill="#4a7a3a"/><path d="M1244 961v18M1236 972l16 0" stroke="#ccc" stroke-width=".7"/><use href="#cn" x="1251" y="976"/>
<rect x="1258" y="963" width="13" height="13" fill="#ddd"/><path d="M1261 966l7 7M1261 966h4M1261 966v4" stroke="#222" stroke-width="1.200"/>
<!-- nav row 1 -->
<rect x="1185" y="941" width="1" height="17" fill="#222"/>
<circle cx="1195" cy="949" r="4" fill="#ddd"/><path d="M1198 952l4 4" stroke="#ccc" stroke-width="1.500"/><path d="M1201 942h6M1204 939v6M1201 947h6" stroke="#ddd"/>
<rect x="1214" y="941" width="5" height="5" fill="#ddd"/><rect x="1221" y="941" width="5" height="5" fill="#aaa"/><rect x="1214" y="948" width="5" height="5" fill="#ccc"/><rect x="1221" y="948" width="5" height="5" fill="#ddd"/><path d="M1225 952l3 3" stroke="#ddd"/>
<path d="M1235 944v-3h4M1248 941h3v3M1251 952v3h-3M1239 955h-4v-3" stroke="#ddd" fill="none"/><polygon points="1238,947 1243,944 1248,946 1248,952 1243,954 1238,952" fill="#6a9a55"/><use href="#cn" x="1250" y="953"/>
<rect x="1261" y="941" width="6" height="6" fill="#ddd"/><rect x="1268" y="941" width="6" height="6" fill="#bbb"/><rect x="1268" y="948" width="6" height="6" fill="#ccc"/><polygon points="1258,950 1262,947 1267,949 1267,955 1262,957 1258,955" fill="#6a9a55"/><use href="#cn" x="1272" y="954"/>

<!-- TASKBAR -->
<rect x="0" y="985" width="1280" height="7" fill="url(#tb)"/>
<rect x="0" y="985" width="1280" height="1" fill="#164f80"/>
<ellipse cx="28" cy="995" rx="14" ry="7" fill="#c5e2f2" stroke="#1d5c88"/>
<rect x="60" y="986" width="58" height="6" fill="#a9d3ea"/>
<rect x="122" y="986" width="58" height="6" fill="#a9d3ea"/><ellipse cx="150" cy="995" rx="9" ry="6" fill="#2f78b8" stroke="#9cc"/>
<rect x="184" y="986" width="58" height="6" fill="#b9dded"/><rect x="200" y="988" width="25" height="4" fill="#666"/>
<rect x="246" y="986" width="58" height="6" fill="#a9d3ea"/><rect x="262" y="990" width="26" height="2" fill="#b6c28e"/>
<rect x="358" y="986" width="58" height="6" fill="#a9d3ea"/><rect x="372" y="988" width="5" height="4" fill="#3c78b5"/><rect x="394" y="988" width="5" height="4" fill="#3c78b5"/>
<polygon points="1000,985 1015,985 1025,992 1008,992" fill="#bfe0f2"/>
<rect x="1266" y="986" width="14" height="6" fill="#8cb8d8" stroke="#1d5c88"/>
</svg>
</body></html>
